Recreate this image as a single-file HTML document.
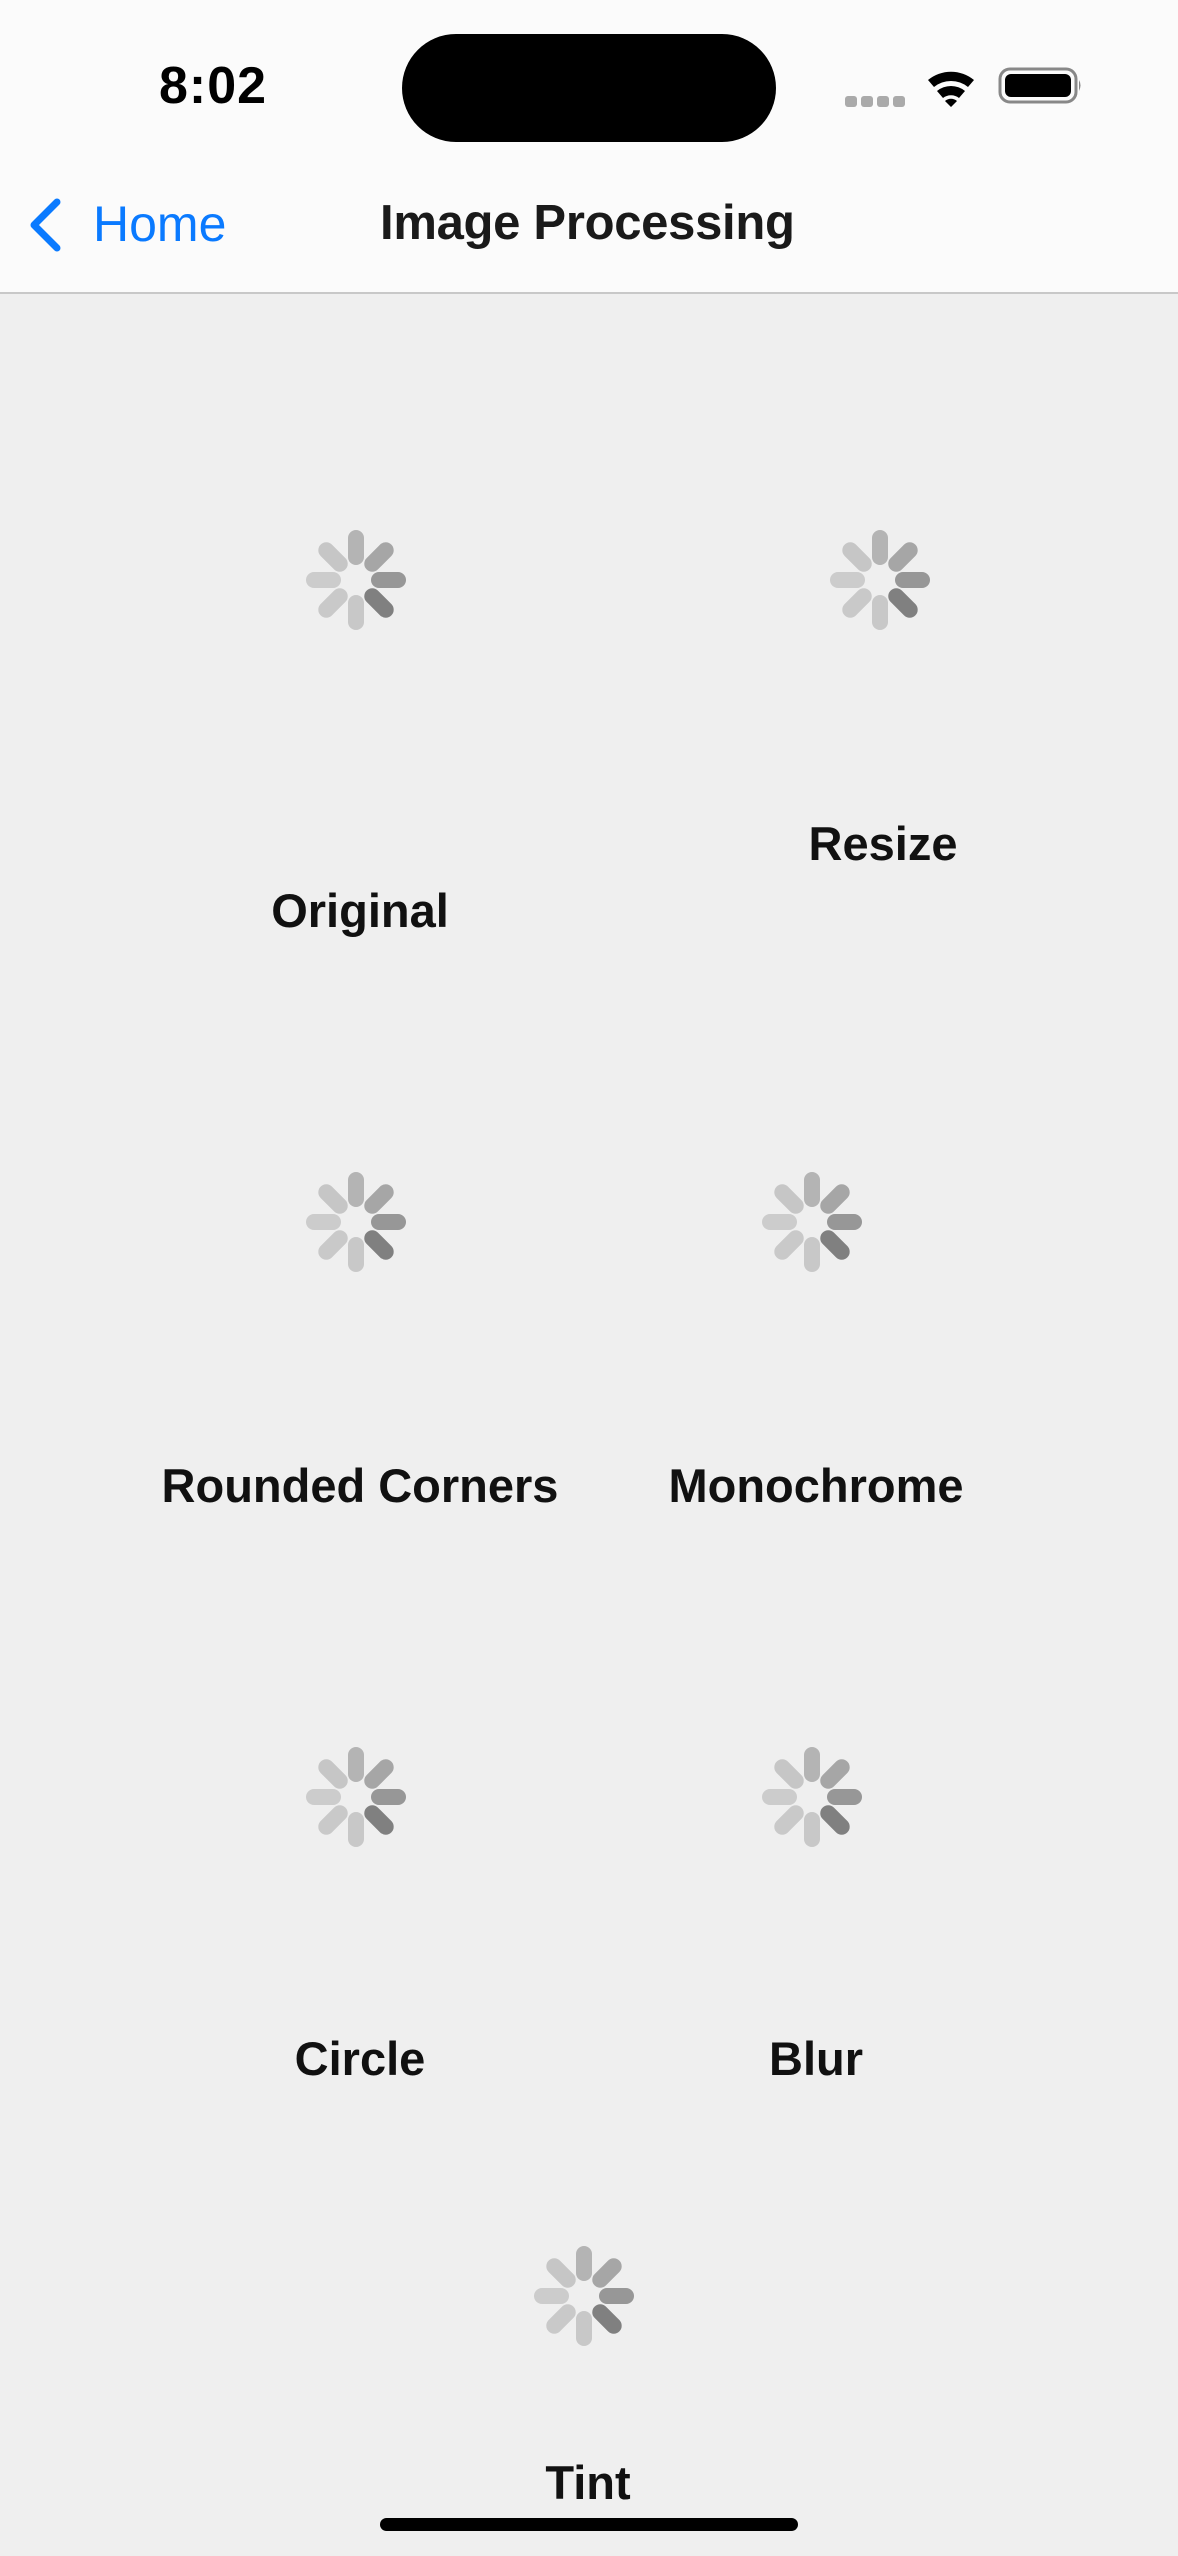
<!DOCTYPE html>
<html><head><meta charset="utf-8">
<style>
body{margin:0;width:1178px;height:2556px;position:relative;overflow:hidden;background:#efefef;font-family:"Liberation Sans",sans-serif;}
.abs{position:absolute}
.top{left:0;top:0;width:1178px;height:292px;background:#fbfbfb;border-bottom:2px solid #c8c8c8}
.lbl{position:absolute;transform:translateX(-50%);font-weight:bold;font-size:47px;color:#111;white-space:nowrap;line-height:1}
.sp{position:absolute;width:120px;height:120px}
</style></head><body>
<div class="abs top"></div>
<div class="abs" style="left:159px;top:60px;font-size:52px;font-weight:bold;color:#000;line-height:1;letter-spacing:1px">8:02</div>
<div class="abs" style="left:402px;top:34px;width:374px;height:108px;border-radius:54px;background:#000"></div>
<svg class="abs" style="left:840px;top:60px" width="250" height="60" viewBox="0 0 250 60">
<g fill="#aaa"><rect x="5" y="36" width="12" height="11" rx="3"/><rect x="21" y="36" width="12" height="11" rx="3"/><rect x="37" y="36" width="12" height="11" rx="3"/><rect x="53" y="36" width="12" height="11" rx="3"/></g>
<path d="M88 20 A36 36 0 0 1 134 20 L128 27 A27 27 0 0 0 94 27Z M97 31 A22 22 0 0 1 125 31 L119 38 A13 13 0 0 0 103 38Z M105 41 A9 9 0 0 1 117 41 L111 47Z" fill="#000"/>
<rect x="160" y="9" width="76" height="33" rx="10" fill="none" stroke="#888" stroke-width="3"/>
<rect x="165" y="14" width="66" height="23" rx="6" fill="#000"/>
<path d="M239 20 q3 5 0 11z" fill="#888"/>
</svg>
<svg class="abs" style="left:26px;top:196px" width="40" height="62"><path d="M31 6 L8 29 L31 52" fill="none" stroke="#0a7aff" stroke-width="7" stroke-linecap="round" stroke-linejoin="round"/></svg>
<div class="abs" style="left:93px;top:199px;font-size:50px;color:#0a7aff;line-height:1">Home</div>
<div class="abs" style="left:380px;top:199px;font-size:49px;font-weight:bold;color:#1a1a1a;line-height:1;letter-spacing:-0.3px">Image Processing</div>

<svg width="0" height="0" style="position:absolute"><defs><g id="s">
<g stroke-linecap="round" stroke-width="16">
<line x1="60" y1="18" x2="60" y2="37" stroke="#b4b4b4" transform="rotate(0 60 60)"/>
<line x1="60" y1="18" x2="60" y2="37" stroke="#a6a6a6" transform="rotate(45 60 60)"/>
<line x1="60" y1="18" x2="60" y2="37" stroke="#979797" transform="rotate(90 60 60)"/>
<line x1="60" y1="18" x2="60" y2="37" stroke="#808080" transform="rotate(135 60 60)"/>
<line x1="60" y1="18" x2="60" y2="37" stroke="#c8c8c8" transform="rotate(180 60 60)"/>
<line x1="60" y1="18" x2="60" y2="37" stroke="#c9c9c9" transform="rotate(225 60 60)"/>
<line x1="60" y1="18" x2="60" y2="37" stroke="#cccccc" transform="rotate(270 60 60)"/>
<line x1="60" y1="18" x2="60" y2="37" stroke="#c6c6c6" transform="rotate(315 60 60)"/>
</g></g></defs></svg>
<svg class="sp" style="left:296px;top:520px"><use href="#s"/></svg>
<svg class="sp" style="left:820px;top:520px"><use href="#s"/></svg>
<svg class="sp" style="left:296px;top:1162px"><use href="#s"/></svg>
<svg class="sp" style="left:752px;top:1162px"><use href="#s"/></svg>
<svg class="sp" style="left:296px;top:1737px"><use href="#s"/></svg>
<svg class="sp" style="left:752px;top:1737px"><use href="#s"/></svg>
<svg class="sp" style="left:524px;top:2236px"><use href="#s"/></svg>

<div class="lbl" style="left:360px;top:887px">Original</div>
<div class="lbl" style="left:883px;top:820px">Resize</div>
<div class="lbl" style="left:360px;top:1462px">Rounded Corners</div>
<div class="lbl" style="left:816px;top:1462px">Monochrome</div>
<div class="lbl" style="left:360px;top:2035px">Circle</div>
<div class="lbl" style="left:816px;top:2035px">Blur</div>
<div class="lbl" style="left:588px;top:2459px">Tint</div>
<div class="abs" style="left:380px;top:2518px;width:418px;height:13px;border-radius:7px;background:#000"></div>
</body></html>
